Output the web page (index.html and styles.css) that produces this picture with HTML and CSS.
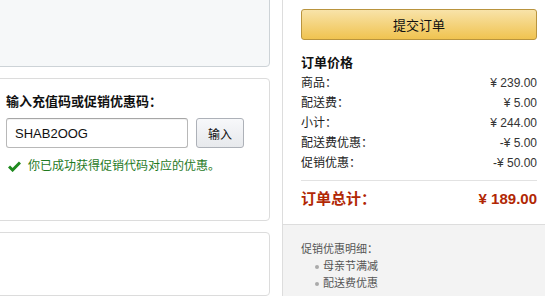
FILE: index.html
```html
<!DOCTYPE html>
<html lang="zh">
<head>
<meta charset="utf-8">
<link rel="stylesheet" href="styles.css">
</head>
<body>
<div class="page">
  <div class="left">
    <div class="box box-top"></div>
    <div class="box box-promo">
      <div class="promo-title">输入充值码或促销优惠码：</div>
      <div class="promo-form">
        <input class="promo-input" type="text" value="SHAB2OOG">
        <button class="promo-btn">输入</button>
      </div>
      <div class="promo-ok">
        <svg class="check" width="13" height="11" viewBox="0 0 13 11"><path d="M1 5.5 L4.6 9 L12 1.5" fill="none" stroke="#1f8a1f" stroke-width="3"/></svg>
        <span>你已成功获得促销代码对应的优惠。</span>
      </div>
    </div>
    <div class="box box-bottom"></div>
  </div>
  <div class="right">
    <div class="summary">
      <button class="submit">提交订单</button>
      <div class="sum-title">订单价格</div>
      <div class="row"><span>商品：</span><span>¥ 239.00</span></div>
      <div class="row"><span>配送费：</span><span>¥ 5.00</span></div>
      <div class="row"><span>小计：</span><span>¥ 244.00</span></div>
      <div class="row"><span>配送费优惠：</span><span>-¥ 5.00</span></div>
      <div class="row"><span>促销优惠：</span><span>-¥ 50.00</span></div>
      <div class="total"><span>订单总计：</span><span>¥ 189.00</span></div>
    </div>
    <div class="details">
      <div class="det-title">促销优惠明细：</div>
      <ul class="det-list">
        <li>母亲节满减</li>
        <li>配送费优惠</li>
      </ul>
    </div>
  </div>
</div>
</body>
</html>
```
FILE: styles.css
```css
* { box-sizing: border-box; }
html, body { margin: 0; padding: 0; background: #fff; overflow: hidden; }
body {
  font-family: "Liberation Sans", Arial, "Noto Sans CJK SC", sans-serif;
  color: #111;
  width: 545px;
  height: 296px;
}
.page {
  display: flex;
  gap: 12px;
  height: 296px;
}
.left {
  margin-left: -10px;
  width: 280px;
  flex: none;
  display: flex;
  flex-direction: column;
  gap: 11px;
}
.box {
  border: 1px solid #d5d9dc;
  border-radius: 4px;
  background: #fff;
}
.box-top {
  margin-top: -10px;
  height: 77px;
  background: #f6f8f9;
  border-color: #cdd3d7;
}
.box-promo {
  height: 143px;
  padding: 14px 0 0 15px;
  border-color: #dcdcdc;
}
.promo-title {
  font-size: 13px;
  font-weight: bold;
  line-height: 18px;
  height: 18px;
}
.promo-form {
  display: flex;
  gap: 8px;
  margin-top: 7px;
}
.promo-input {
  width: 182px;
  height: 30px;
  border: 1px solid #b8b8b8;
  border-top-color: #a6a6a6;
  border-radius: 3px;
  padding: 0 8px;
  font-family: "Liberation Sans", Arial, sans-serif;
  font-size: 13px;
  color: #111;
  box-shadow: inset 0 1px 0 rgba(0,0,0,0.05);
  outline: none;
}
.promo-btn {
  width: 48px;
  height: 30px;
  border: 1px solid #adb1b8;
  border-radius: 3px;
  background: linear-gradient(#f7f8fa, #e7e9ec);
  font-family: "Noto Sans CJK SC", sans-serif;
  font-size: 12px;
  color: #111;
  padding: 0;
}
.promo-ok {
  display: flex;
  align-items: center;
  gap: 7px;
  margin-top: 10px;
  margin-left: 2px;
  font-size: 12px;
  color: #1f7a1f;
  line-height: 16px;
}
.check { flex: none; }
.box-bottom {
  flex: 1;
  border-color: #dcdcdc;
}
.right {
  flex: 1;
  border-left: 1px solid #dddddd;
  display: flex;
  flex-direction: column;
}
.summary {
  padding: 9px 8px 0 18px;
  height: 224px;
}
.submit {
  display: block;
  width: 100%;
  height: 31px;
  border: 1px solid #b9943e;
  border-radius: 3px;
  background: linear-gradient(#f8e3a9, #f0c350);
  font-family: "Noto Sans CJK SC", sans-serif;
  font-size: 13px;
  color: #111;
  padding: 0;
}
.sum-title {
  margin-top: 13px;
  font-size: 13px;
  font-weight: bold;
  line-height: 20px;
}
.row {
  display: flex;
  justify-content: space-between;
  font-size: 12px;
  line-height: 20px;
  height: 20px;
  color: #222;
}
.row span:last-child { color: #333; }
.total {
  margin-top: 7px;
  border-top: 1px solid #e2e2e2;
  padding-top: 8px;
  display: flex;
  justify-content: space-between;
  font-size: 15px;
  font-weight: bold;
  line-height: 20px;
  color: #b12704;
}
.details {
  flex: 1;
  background: #f3f3f3;
  border-top: 1px solid #dddddd;
  padding: 16px 0 0 18px;
  font-size: 11px;
  color: #555;
}
.det-title { line-height: 17px; }
.det-list {
  margin: 0;
  padding: 0 0 0 14px;
  list-style: none;
}
.det-list li {
  line-height: 17px;
  position: relative;
  padding-left: 8px;
}
.det-list li::before {
  content: "";
  position: absolute;
  left: 0;
  top: 7px;
  width: 4px;
  height: 4px;
  border-radius: 50%;
  background: #aaa;
}
```
